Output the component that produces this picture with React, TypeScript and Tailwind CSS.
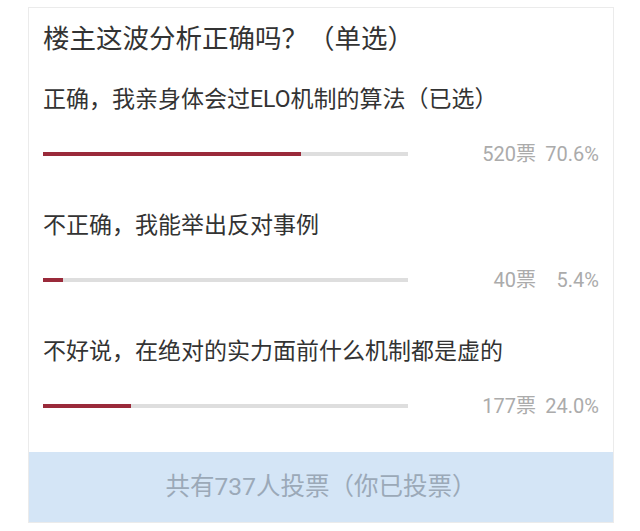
import React from 'react'

interface PollOption {
    label: string
    votes: number
    percent: string
    ratio: number
}

const options: PollOption[] = [
    { label: '正确，我亲身体会过ELO机制的算法（已选）', votes: 520, percent: '70.6%', ratio: 0.706 },
    { label: '不正确，我能举出反对事例', votes: 40, percent: '5.4%', ratio: 0.054 },
    { label: '不好说，在绝对的实力面前什么机制都是虚的', votes: 177, percent: '24.0%', ratio: 0.24 },
]

const font = { fontFamily: 'Roboto, "Noto Sans CJK SC", sans-serif' }

function OptionRow({ option, first }: { option: PollOption; first: boolean }) {
    return (
        <div className={first ? 'mt-[28px]' : 'mt-[41px]'}>
            <div className="text-[23px] leading-[32px] text-[#333]">{option.label}</div>
            <div className="mt-[23px] flex items-center h-[30px]">
                <div className="relative w-[365px] h-[4px] bg-[#dedede]">
                    <div
                        className="absolute left-0 top-0 h-full bg-[#9a2a3a]"
                        style={{ width: `${option.ratio * 100}%` }}
                    />
                </div>
                <div className="flex-1 flex justify-end items-center text-[20px] leading-[30px] text-[#ababab]">
                    <span>{option.votes}票</span>
                    <span className="w-[63px] text-right">{option.percent}</span>
                </div>
            </div>
        </div>
    )
}

export default function App() {
    return (
        <div className="w-[640px] h-[531px] bg-white pt-[7px]" style={font}>
            <div className="ml-[28px] w-[586px] h-[516px] border border-[#ebebeb] bg-white flex flex-col">
                <div className="px-[14px] flex-1 pt-[14px]">
                    <div className="text-[26.5px] leading-[34px] text-[#333]">楼主这波分析正确吗？（单选）</div>
                    {options.map((o, i) => (
                        <OptionRow key={o.label} option={o} first={i === 0} />
                    ))}
                </div>
                <div className="h-[70px] bg-[#d4e5f6] flex items-center justify-center text-[24.5px] text-[#9ba9b8]">
                    共有737人投票（你已投票）
                </div>
            </div>
        </div>
    )
}
